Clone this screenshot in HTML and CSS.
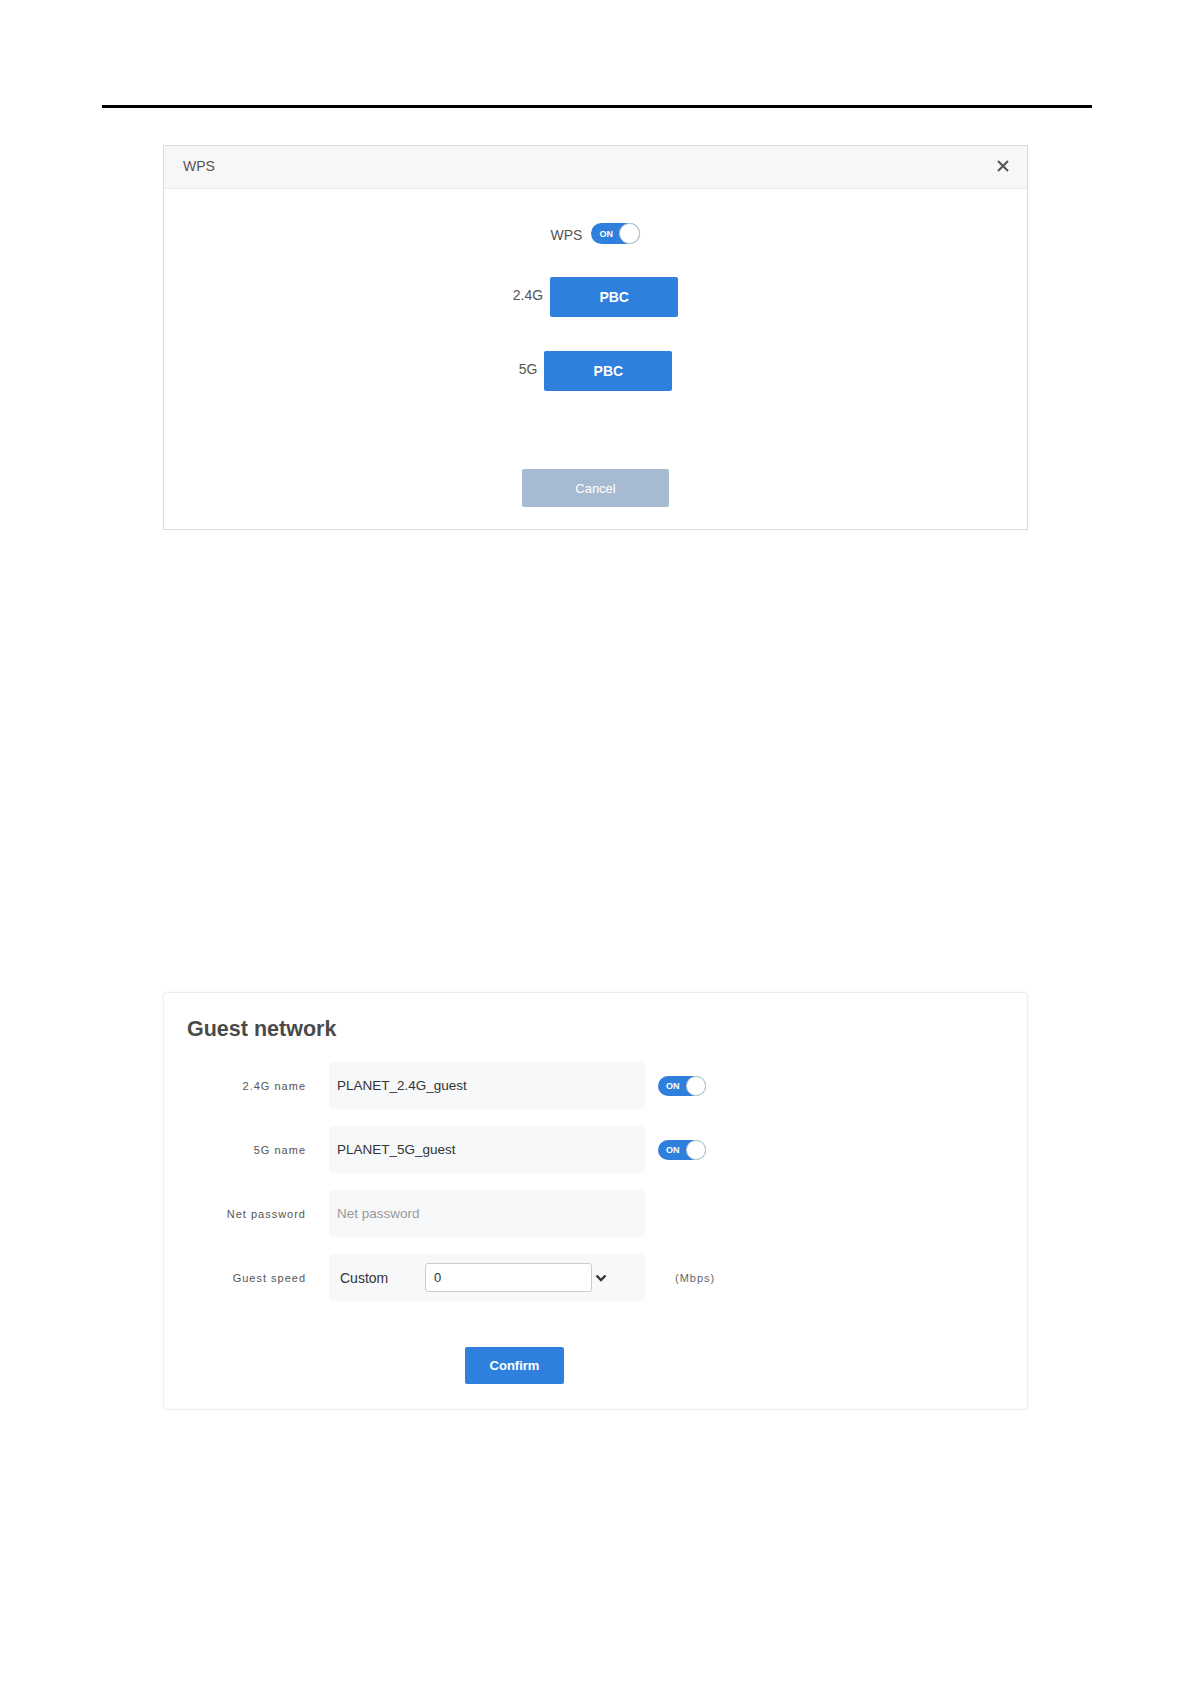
FILE: index.html
```html
<!DOCTYPE html>
<html lang="en">
<head>
    <meta charset="UTF-8">
    <meta name="viewport" content="width=device-width, initial-scale=1.0">
    <title>WPS / Guest network</title>
    <link rel="stylesheet" href="styles.css">
</head>
<body>
    <div class="rule"></div>

    <div class="dialog">
        <div class="dialog-header">
            <span class="dialog-title">WPS</span>
            <button class="close-btn" type="button">
                <svg width="12" height="12" viewBox="0 0 12 12">
                    <path d="M1 1 L11 11 M11 1 L1 11" stroke="#555" stroke-width="2" fill="none"/>
                </svg>
            </button>
        </div>
        <div class="dialog-body">
            <div class="wps-row">
                <span class="wps-label">WPS</span>
                <span class="toggle"><span class="toggle-text">ON</span></span>
            </div>
            <div class="band-row first">
                <span class="band-label">2.4G</span>
                <button class="btn-blue btn-pbc" type="button">PBC</button>
            </div>
            <div class="band-row">
                <span class="band-label">5G</span>
                <button class="btn-blue btn-pbc" type="button">PBC</button>
            </div>
            <button class="btn-cancel" type="button">Cancel</button>
        </div>
    </div>

    <div class="card">
        <h2 class="card-title">Guest network</h2>
        <div class="form">
            <div class="form-row">
                <label class="form-label">2.4G name</label>
                <div class="field">PLANET_2.4G_guest</div>
                <span class="toggle toggle-row"><span class="toggle-text">ON</span></span>
            </div>
            <div class="form-row">
                <label class="form-label">5G name</label>
                <div class="field">PLANET_5G_guest</div>
                <span class="toggle toggle-row"><span class="toggle-text">ON</span></span>
            </div>
            <div class="form-row">
                <label class="form-label">Net password</label>
                <div class="field placeholder">Net password</div>
            </div>
            <div class="form-row">
                <label class="form-label">Guest speed</label>
                <div class="field field-speed">
                    <span class="speed-mode">Custom</span>
                    <span class="speed-input">0</span>
                    <svg class="chevron" width="12" height="8" viewBox="0 0 12 8">
                        <path d="M1.5 1.5 L6 6 L10.5 1.5" stroke="#333" stroke-width="2.4" fill="none"/>
                    </svg>
                </div>
                <span class="unit">(Mbps)</span>
            </div>
        </div>
        <button class="btn-blue btn-confirm" type="button">Confirm</button>
    </div>
</body>
</html>
```

FILE: styles.css
```css
body {
    margin: 0;
    font-family: "Liberation Sans", Arial, sans-serif;
    background-color: #fff;
    color: #555;
}
.rule {
    height: 3px;
    background-color: #000;
    margin: 105px 99px 0 102px;
}

/* WPS dialog */
.dialog {
    width: 863px;
    margin: 37px 0 0 163px;
    border: 1px solid #dcdcdc;
}
.dialog-header {
    height: 43px;
    background-color: #f7f7f7;
    border-bottom: 1px solid #ebebeb;
    display: flex;
    align-items: center;
    justify-content: space-between;
    padding: 0 18px 3px 19px;
    box-sizing: border-box;
}
.dialog-title {
    font-size: 14px;
    color: #555;
}
.close-btn {
    background: none;
    border: none;
    padding: 0;
    display: flex;
    cursor: pointer;
}
.dialog-body {
    display: flex;
    flex-direction: column;
    align-items: center;
    padding: 34px 0 22px;
}
.wps-row {
    display: flex;
    align-items: center;
    gap: 9px;
    height: 21px;
}
.wps-label {
    font-size: 14px;
    margin-top: 3px;
}
.band-row {
    display: flex;
    align-items: center;
    gap: 7px;
    margin-top: 34px;
}
.band-row.first {
    margin-top: 33px;
}
.band-label {
    font-size: 14px;
    margin-bottom: 5px;
}
.btn-blue {
    background-color: #2f80dc;
    color: #fff;
    border: none;
    border-radius: 2px;
    font-family: inherit;
    font-weight: bold;
    cursor: pointer;
}
.btn-pbc {
    width: 128px;
    height: 40px;
    font-size: 14px;
}
.btn-cancel {
    width: 147px;
    height: 38px;
    margin-top: 78px;
    background-color: #a6bbd1;
    color: #fff;
    border: none;
    border-radius: 2px;
    font-family: inherit;
    font-size: 13px;
}

/* toggle switch */
.toggle {
    position: relative;
    display: inline-flex;
    align-items: center;
    width: 49px;
    height: 21px;
    border-radius: 11px;
    background-color: #2f80dc;
    box-sizing: border-box;
}
.toggle-text {
    color: #fff;
    font-size: 9px;
    font-weight: bold;
    padding-left: 8px;
}
.toggle::after {
    content: "";
    position: absolute;
    right: 0;
    top: 0;
    width: 21px;
    height: 21px;
    border-radius: 50%;
    background-color: #fff;
    border: 1px solid #c9c9c9;
    box-sizing: border-box;
}

/* Guest network card */
.card {
    width: 865px;
    margin: 462px 0 0 163px;
    border: 1px solid #ededed;
    border-radius: 4px;
    box-shadow: 0 0 4px rgba(0, 0, 0, 0.04);
    padding: 23px 23px 25px;
    box-sizing: border-box;
}
.card-title {
    margin: 0 0 20px;
    font-size: 21.5px;
    line-height: 26px;
    color: #4a4a4a;
    font-weight: bold;
}
.form {
    display: flex;
    flex-direction: column;
    gap: 17px;
}
.form-row {
    display: flex;
    align-items: center;
    height: 47px;
}
.form-label {
    width: 119px;
    margin-right: 23px;
    text-align: right;
    font-size: 11px;
    letter-spacing: 1px;
    color: #555;
}
.field {
    width: 316px;
    height: 47px;
    background-color: #f7f8fa;
    border-radius: 4px;
    padding: 0 8px;
    box-sizing: border-box;
    display: flex;
    align-items: center;
    font-size: 13.5px;
    color: #333;
}
.field.placeholder {
    color: #999;
}
.toggle-row {
    margin-left: 13px;
    width: 48px;
    height: 20px;
}
.toggle-row::after {
    width: 20px;
    height: 20px;
}
.field-speed {
    padding-left: 11px;
}
.speed-mode {
    width: 85px;
    font-size: 14px;
}
.speed-input {
    width: 167px;
    height: 29px;
    background-color: #fff;
    border: 1px solid #ccc;
    border-radius: 3px;
    box-sizing: border-box;
    padding-left: 8px;
    display: flex;
    align-items: center;
    font-size: 13px;
}
.chevron {
    margin-left: 3px;
}
.unit {
    margin-left: 30px;
    font-size: 11px;
    letter-spacing: 1px;
    color: #666;
}
.btn-confirm {
    width: 99px;
    height: 37px;
    margin: 46px 0 0 278px;
    font-size: 13px;
}
```
